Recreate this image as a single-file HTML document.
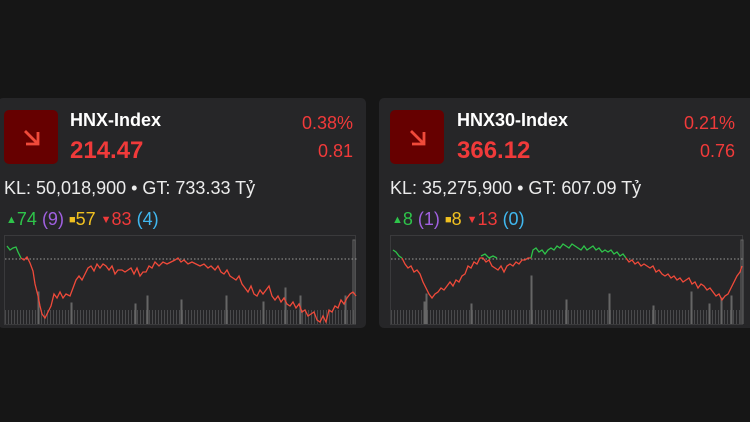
<!DOCTYPE html>
<html><head><meta charset="utf-8"><style>
body{margin:0;width:750px;height:422px;background:#161616;font-family:"Liberation Sans",sans-serif;position:relative;overflow:hidden}
.card{position:absolute;top:98px;height:230px;background:#262628;border-radius:5px}
.ic{position:absolute;top:12px;width:54px;height:54px;background:#660000;border-radius:5px}
.t{position:absolute;top:12px;color:#fff;font-weight:bold;font-size:18px}
.p{position:absolute;top:39px;color:#f03a3a;font-weight:bold;font-size:24px}
.r1,.r2{position:absolute;color:#f03a3a;font-size:18px}
.r1{top:15px}.r2{top:43px}
.kl{position:absolute;top:80px;color:#ececec;font-size:18px}
.cn{position:absolute;top:111px;font-size:18px}
.ch{position:absolute;top:137px;height:90px;border:1px solid #3a3a3c;box-sizing:border-box}
.vb{position:absolute;left:0;right:0;bottom:0;height:14px;background:repeating-linear-gradient(90deg,#4a4a4c 0 1px,transparent 1px 3px)}
.s{font-size:11px;vertical-align:2px}
</style></head><body>
<div class="card" style="left:-2px;width:368px">
<div class="ic" style="left:6px"><svg width="54" height="54"><path d="M21 21L33 33M22 34H34V22" stroke="#f04a3a" stroke-width="2.8" fill="none"/></svg></div>
<div class="t" style="left:72px">HNX-Index</div><div class="p" style="left:72px">214.47</div>
<div class="r1" style="right:13px">0.38%</div><div class="r2" style="right:13px">0.81</div>
<div class="kl" style="left:6px">KL: 50,018,900 • GT: 733.33 Tỷ</div>
<div class="cn" style="left:8px"><span class="s" style="color:#2ec44a">▲</span><span style="color:#2ec44a">74</span> <span style="color:#a060e0">(9)</span> <span class="s" style="color:#f0c020">■</span><span style="color:#f0c020">57</span> <span class="s" style="color:#f03a3a">▼</span><span style="color:#f03a3a">83</span> <span style="color:#40b8f0">(4)</span></div>
<div class="ch" style="left:6px;width:352px"><div class="vb"></div>
<svg style="position:absolute;left:0;top:0" width="352" height="90" viewBox="0 0 352 90">
<path d="M33 88V56h1v32M66 88V67h1v21M142 88V60h1v28M176 88V64h1v24M221 88V60h1v28M280 88V52h1v36M295 88V60h1v28M340 88V60h1v28M348 88V4h2v84M130 88V68h1v20M258 88V66h1v22" stroke="#666" fill="none"/>
<line x1="0" y1="23" x2="352" y2="23" stroke="#999" stroke-dasharray="1.5 2"/>
<polyline points="2,10 5,14 8,12 11,11 13,16 16,22" stroke="#2ec44a" stroke-width="1.3" fill="none"/>
<polyline points="16,22 19,24 22,21 25,27 28,35 30,48 33,60 35,70 37,78 40,82 43,76 46,70 49,58 52,62 55,56 58,62 61,58 65,60 68,52 71,44 74,40 77,44 80,38 83,32 86,30 89,35 92,28 95,32 98,28 101,30 104,34 107,30 110,38 113,34 117,34 120,36 123,34 126,32 129,38 132,32 135,40 138,36 141,36 144,30 147,32 150,26 154,30 158,26 162,28 166,26 170,24 173,22 176,26 179,24 183,28 187,26 191,28 195,30 199,28 203,32 206,30 210,34 213,30 216,36 219,38 222,34 225,40 228,42 231,44 234,40 237,48 240,52 243,56 246,50 249,58 252,60 255,54 258,58 261,54 264,50 267,60 270,64 273,60 276,66 279,62 282,68 285,70 288,66 291,72 294,68 297,76 300,74 303,80 306,78 309,76 312,84 315,86 318,80 321,86 324,74 327,76 330,70 333,72 336,64 339,68 342,62 345,58 348,56 351,60" stroke="#f04a3a" stroke-width="1.3" fill="none"/></svg></div>
</div>
<div class="card" style="left:379px;width:380px">
<div class="ic" style="left:11px"><svg width="54" height="54"><path d="M21 21L33 33M22 34H34V22" stroke="#f04a3a" stroke-width="2.8" fill="none"/></svg></div>
<div class="t" style="left:78px">HNX30-Index</div><div class="p" style="left:78px">366.12</div>
<div class="r1" style="right:24px">0.21%</div><div class="r2" style="right:24px">0.76</div>
<div class="kl" style="left:11px">KL: 35,275,900 • GT: 607.09 Tỷ</div>
<div class="cn" style="left:13px"><span class="s" style="color:#2ec44a">▲</span><span style="color:#2ec44a">8</span> <span style="color:#a060e0">(1)</span> <span class="s" style="color:#f0c020">■</span><span style="color:#f0c020">8</span> <span class="s" style="color:#f03a3a">▼</span><span style="color:#f03a3a">13</span> <span style="color:#40b8f0">(0)</span></div>
<div class="ch" style="left:11px;width:353px"><div class="vb"></div>
<svg style="position:absolute;left:0;top:0" width="353" height="90" viewBox="0 0 353 90">
<path d="M35 88V58h1v30M33 88V66h1v22M80 88V68h1v20M140 88V40h1v48M175 88V64h1v24M218 88V58h1v30M262 88V70h1v18M300 88V56h1v32M318 88V68h1v20M340 88V60h1v28M350 88V4h2v84M330 88V62h1v26" stroke="#666" fill="none"/>
<line x1="0" y1="23" x2="353" y2="23" stroke="#999" stroke-dasharray="1.5 2"/>
<polyline points="2,14 5,16 8,20 11,22" stroke="#2ec44a" stroke-width="1.3" fill="none"/>
<polyline points="11,22 14,28 17,32 20,30 23,36 26,34 29,38 32,46 35,52 38,58 41,62 44,58 47,56 50,52 53,54 56,50 59,46 62,50 65,44 68,46 71,40 74,38 77,30 80,32 83,26 86,28 89,22 92,22 95,26 98,24 101,30 104,32 107,34 110,30 113,36 116,30 119,28 122,30 125,26 128,28 131,24 134,24 137,22 140,22" stroke="#f04a3a" stroke-width="1.3" fill="none"/>
<polyline points="90,20 94,18 98,22 102,20 106,22" stroke="#2ec44a" stroke-width="1.3" fill="none"/>
<polyline points="140,22 142,14 145,12 148,16 151,14 154,18 157,14 160,12 163,14 166,10 169,12 172,8 175,10 178,12 181,8 184,10 187,12 190,14 193,10 196,14 199,12 202,10 205,14 208,12 211,16 214,14 217,16 220,14 223,18 226,16 229,20 232,18 235,22" stroke="#2ec44a" stroke-width="1.3" fill="none"/>
<polyline points="235,22 238,26 241,24 244,28 247,26 250,30 253,28 256,30 259,32 262,30 265,36 268,34 271,38 274,40 277,38 280,42 283,40 286,44 289,42 292,46 295,44 298,42 301,48 304,46 307,52 310,48 313,50 316,54 319,52 322,56 325,60 328,58 331,64 334,60 337,58 340,52 343,46 346,40 349,36 351,30" stroke="#f04a3a" stroke-width="1.3" fill="none"/>
</svg></div>
</div>
</body></html>
